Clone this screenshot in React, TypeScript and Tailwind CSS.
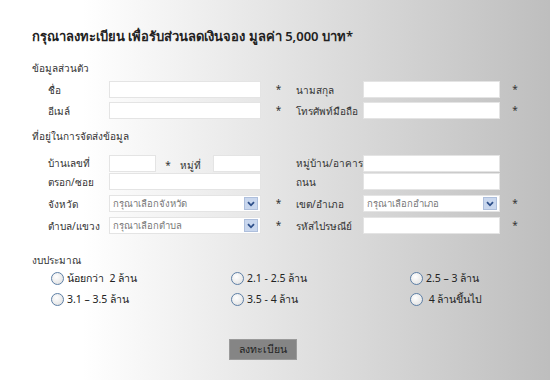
import React from "react";

const Star = () => <span className="text-[10px] text-[#333] text-center">*</span>;

const Input = ({ w }: { w: string }) => (
  <div className={`${w} h-[17px] bg-white border border-[#e4e4e4]`} />
);

const Chevron = () => (
  <span className="w-[14px] h-[13px] bg-[#c9d7ee] border border-[#aebfdc] flex items-center justify-center">
    <svg width="8" height="6" viewBox="0 0 8 6">
      <path d="M1 1.2 L4 4.3 L7 1.2" fill="none" stroke="#2d4f8a" strokeWidth="1.8" />
    </svg>
  </span>
);

const Select = ({ text, w }: { text: string; w: string }) => (
  <div className={`${w} h-[17px] bg-white border border-[#e4e4e4] flex items-center justify-between pl-[3px] pr-[2px]`}>
    <span className="text-[9.5px] text-[#777] leading-none whitespace-nowrap">{text}</span>
    <Chevron />
  </div>
);

const Label = ({ children }: { children: React.ReactNode }) => (
  <span className="text-[10px] text-[#333] leading-none whitespace-nowrap">{children}</span>
);

const Row = ({ l1, c1, s1, l2, c2, s2 }: any) => (
  <div className="grid grid-cols-[61px_152px_35px_67px_137px_30px] items-center h-[17px]">
    <Label>{l1}</Label>
    {c1}
    {s1 ? <Star /> : <span />}
    <Label>{l2}</Label>
    {c2}
    {s2 ? <Star /> : <span />}
  </div>
);

const Radio = ({ label }: { label: string }) => (
  <div className="flex items-center gap-[3px]">
    <span className="w-[13px] h-[13px] rounded-full border-[1.5px] border-[#5d7fa6] bg-[radial-gradient(circle_at_40%_35%,#ffffff,#dcdcdc)]" />
    <span className="text-[10.5px] text-[#222] leading-none whitespace-pre">{label}</span>
  </div>
);

export default function App() {
  return (
    <div className="w-[550px] h-[380px] overflow-hidden bg-[linear-gradient(to_right,#ffffff_15%,#bebebe_100%)] pl-[32px] pt-[27px] font-['Noto_Sans',sans-serif]">
      <h1 className="text-[13px] font-semibold text-[#222] leading-[18px] whitespace-nowrap">
        กรุณาลงทะเบียน เพื่อรับส่วนลดเงินจอง มูลค่า 5,000 บาท*
      </h1>

      <div className="mt-[16px] text-[10px] text-[#333] leading-[14px]">ข้อมูลส่วนตัว</div>
      <div className="pl-[16px] mt-[6px] flex flex-col gap-[4px]">
        <Row l1="ชื่อ" c1={<Input w="w-[152px]" />} s1 l2="นามสกุล" c2={<Input w="w-[137px]" />} s2 />
        <Row l1="อีเมล์" c1={<Input w="w-[152px]" />} s1 l2="โทรศัพท์มือถือ" c2={<Input w="w-[137px]" />} s2 />
      </div>

      <div className="mt-[10px] text-[10px] text-[#333] leading-[14px]">ที่อยู่ในการจัดส่งข้อมูล</div>
      <div className="pl-[16px] mt-[8px] flex flex-col gap-[5px]">
        <Row
          l1="บ้านเลขที่"
          c1={
            <div className="flex items-center">
              <Input w="w-[47px]" />
              <span className="w-[24px] text-center"><Star /></span>
              <span className="w-[33px]"><Label>หมู่ที่</Label></span>
              <Input w="w-[48px]" />
            </div>
          }
          l2="หมู่บ้าน/อาคาร"
          c2={<Input w="w-[137px]" />}
        />
        <Row l1="ตรอก/ซอย" c1={<Input w="w-[152px]" />} l2="ถนน" c2={<Input w="w-[137px]" />} />
        <Row
          l1="จังหวัด"
          c1={<Select w="w-[152px]" text="กรุณาเลือกจังหวัด" />}
          s1
          l2="เขต/อำเภอ"
          c2={<Select w="w-[137px]" text="กรุณาเลือกอำเภอ" />}
          s2
        />
        <Row l1="ตำบล/แขวง" c1={<Select w="w-[152px]" text="กรุณาเลือกตำบล" />} s1 l2="รหัสไปรษณีย์" c2={<Input w="w-[137px]" />} s2 />
      </div>

      <div className="mt-[19px] text-[10px] text-[#333] leading-[14px]">งบประมาณ</div>
      <div className="pl-[19px] mt-[5px] grid grid-cols-[180px_179px_120px] gap-y-[8px]">
        <Radio label="น้อยกว่า  2 ล้าน" />
        <Radio label="2.1 - 2.5 ล้าน" />
        <Radio label="2.5 – 3 ล้าน" />
        <Radio label="3.1 – 3.5 ล้าน" />
        <Radio label="3.5 - 4 ล้าน" />
        <Radio label=" 4 ล้านขึ้นไป" />
      </div>

      <div className="mt-[29px] pl-[197px]">
        <button className="w-[68px] h-[21px] bg-[#858585] border border-[#9a9a9a] text-[10.5px] text-[#222] leading-none">
          ลงทะเบียน
        </button>
      </div>
    </div>
  );
}
